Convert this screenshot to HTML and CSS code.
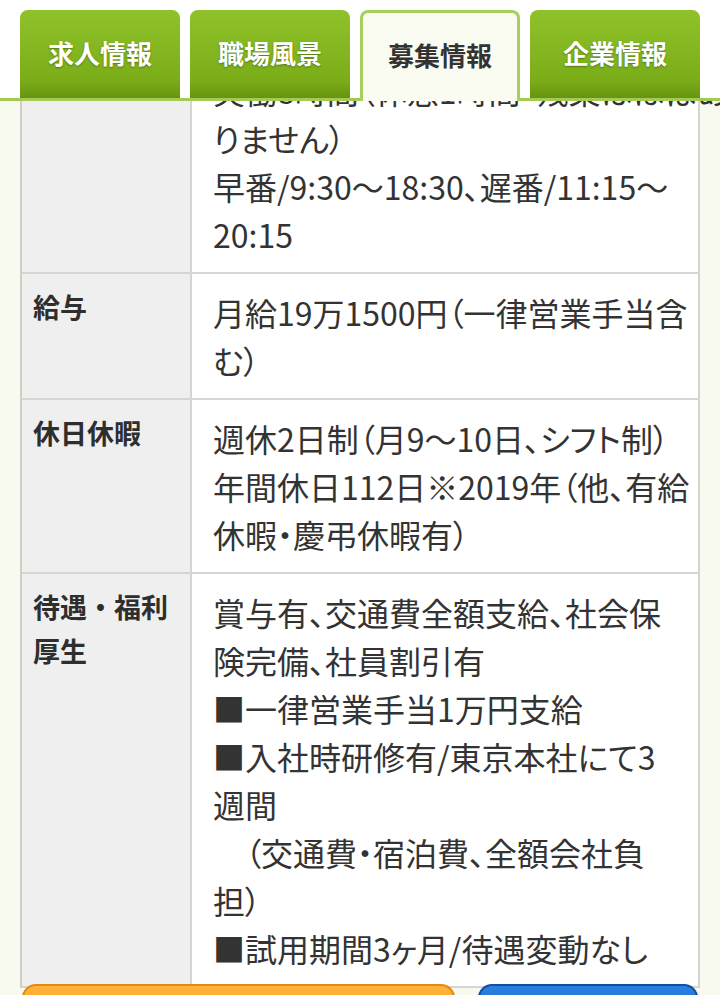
FILE: index.html
```html
<!DOCTYPE html>
<html lang="ja">
<head>
  <meta charset="UTF-8">
  <meta name="viewport" content="width=device-width, initial-scale=1.0">
  <title>募集情報</title>
  <link rel="stylesheet" href="styles.css">
</head>
<body>

  <!-- Tab navigation -->
  <nav class="tab-bar">
    <a class="tab" href="#job">求人情報</a>
    <a class="tab" href="#scene">職場風景</a>
    <a class="tab tab-active" href="#recruit">募集情報</a>
    <a class="tab" href="#company">企業情報</a>
  </nav>

  <!-- Recruit details (page is scrolled a little) -->
  <div class="scroll-area">
    <table class="info-table">
      <tr>
        <th>勤務時間</th>
        <td>シフト制<br>実働8時間（休憩1時間・残業はほぼあ<br>りません）<br>早番/9:30〜18:30、遅番/11:15〜<br>20:15</td>
      </tr>
      <tr>
        <th>給与</th>
        <td>月給19万1500円（一律営業手当含<br>む）</td>
      </tr>
      <tr>
        <th>休日休暇</th>
        <td>週休2日制（月9〜10日、シフト制）<br>年間休日112日※2019年（他、有給<br>休暇・慶弔休暇有）</td>
      </tr>
      <tr>
        <th>待遇・福利厚生</th>
        <td>賞与有、交通費全額支給、社会保<br>険完備、社員割引有<br>■一律営業手当1万円支給<br>■入社時研修有/東京本社にて3<br>週間<br>　（交通費・宿泊費、全額会社負<br>担）<br>■試用期間3ヶ月/待遇変動なし</td>
      </tr>
    </table>

    <div class="actions">
      <a class="btn btn-entry" href="#entry">WEBで応募する</a>
      <a class="btn btn-tel" href="#tel">電話で応募</a>
    </div>
  </div>

</body>
</html>
```

FILE: styles.css
```css
body {
  margin: 0;
  background-color: #f9faef;
  color: #333;
  font-family: "Noto Sans CJK JP", sans-serif;
}

/* Tabs */
.tab-bar {
  display: grid;
  grid-template-columns: 160px 160px 160px 1fr;
  column-gap: 10px;
  padding: 10px 20px 0 20px;
  background-color: #fff;
  border-bottom: 3px solid #a4c955;
}

.tab {
  display: flex;
  justify-content: center;
  align-items: center;
  height: 88px;
  box-sizing: border-box;
  padding-bottom: 2px;
  border-radius: 8px 8px 0 0;
  background: linear-gradient(#8fc22a, #7aad18 80%, #679410);
  color: #fff;
  font-size: 26px;
  font-weight: bold;
  line-height: 1.3;
  text-decoration: none;
  text-shadow: 0 1px 2px rgba(0, 0, 0, 0.35);
}

.tab-active {
  height: 91px;
  margin-bottom: -3px;
  padding-bottom: 5px;
  background: #fbfcf1;
  border: 3px solid #a9cf5c;
  border-bottom: none;
  color: #333;
  text-shadow: none;
}

/* Table */
.scroll-area {
  overflow: hidden;
  padding: 0 20px;
}

.info-table {
  width: 680px;
  margin-top: -97px;
  table-layout: fixed;
  border-collapse: separate;
  border-spacing: 0;
}

.info-table th,
.info-table td {
  vertical-align: top;
  text-align: left;
  border-bottom: 2px solid #d5d5d3;
}

.info-table th {
  width: 172px;
  box-sizing: border-box;
  padding: 11px 11px 14px 11px;
  background-color: #efefef;
  border-left: 2px solid #cfd0c4;
  border-right: 2px solid #d5d5d3;
  color: #2e2e2e;
  font-size: 27px;
  font-weight: bold;
  line-height: 44px;
}

.info-table td {
  padding: 14px 10px 14px 21px;
  background-color: #fff;
  border-right: 2px solid #d5d5d0;
  font-size: 32px;
  line-height: 48px;
  font-feature-settings: "palt";
  white-space: nowrap;
}

/* Buttons under the table */
.actions {
  display: grid;
  grid-template-columns: 433px 1fr;
  column-gap: 23px;
  margin-top: -4px;
  padding: 0 2px;
}

.btn {
  display: block;
  height: 64px;
  border-radius: 14px;
  color: #fff;
  font-size: 26px;
  font-weight: bold;
  line-height: 64px;
  text-align: center;
  text-decoration: none;
}

.btn-entry {
  background: linear-gradient(#ffb23c, #f39800);
  border: 2px solid #e08a10;
}

.btn-tel {
  background: linear-gradient(#2b7fe0, #1560c2);
  border: 2px solid #124f9e;
}
```
